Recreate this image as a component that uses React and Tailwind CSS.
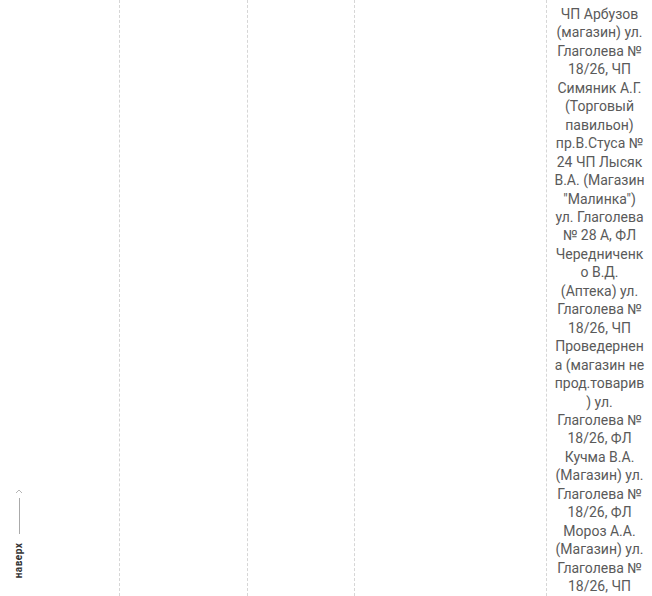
export default function App() {
  const text =
    'ЧП Арбузов (магазин) ул. Глаголева № 18/26, ЧП Симяник А.Г. (Торговый павильон) пр.В.Стуса № 24 ЧП Лысяк В.А. (Магазин "Малинка") ул. Глаголева № 28 А, ФЛ Чередниченко В.Д. (Аптека) ул. Глаголева № 18/26, ЧП Проведернена (магазин не прод.товарив) ул. Глаголева № 18/26, ФЛ Кучма В.А. (Магазин) ул. Глаголева № 18/26, ФЛ Мороз А.А. (Магазин) ул. Глаголева № 18/26, ЧП';
  return (
    <div
      className="relative w-[652px] h-[596px] overflow-hidden bg-white"
      style={{ fontFamily: 'Roboto, "Liberation Sans", sans-serif' }}
    >
      <div className="flex h-[596px]">
        <div className="w-[120px] shrink-0 border-r border-dashed border-[#d6d6d6]" />
        <div className="w-[128px] shrink-0 border-r border-dashed border-[#d6d6d6]" />
        <div className="w-[107px] shrink-0 border-r border-dashed border-[#d6d6d6]" />
        <div className="w-[192px] shrink-0 border-r border-dashed border-[#d6d6d6]" />
        <div className="w-[105px] shrink-0 px-[6px] pt-[5px]">
          <p className="text-center text-[14px] leading-[18.45px] text-[#5a5a5a] break-words">
            {text}
          </p>
        </div>
      </div>
      <div className="absolute left-[11px] top-[488px] flex flex-col items-center w-[16px]">
        <svg width="8" height="6" viewBox="0 0 8 6" className="mb-[4px]">
          <path d="M1 5 L4 2 L7 5" fill="none" stroke="#b5b5b5" strokeWidth="1" />
        </svg>
        <div className="w-px h-[36px] bg-[#aaaaaa]" />
        <div className="mt-[6px] h-[40px] flex items-center justify-center">
          <span className="block -rotate-90 whitespace-nowrap text-[10px] font-bold text-[#333333] tracking-[0.5px]">
            наверх
          </span>
        </div>
      </div>
    </div>
  );
}
